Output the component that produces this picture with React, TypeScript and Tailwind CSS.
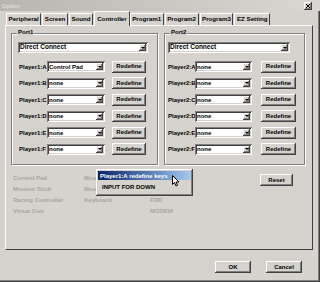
import React from 'react';

const raised =
  'bg-[#d6d3ce] shadow-[inset_-1px_-1px_0_#404040,inset_1px_1px_0_#ffffff,inset_-2px_-2px_0_#808080]';
const sunken =
  'bg-white shadow-[inset_1px_1px_0_#808080,inset_-1px_-1px_0_#ffffff,inset_2px_2px_0_#404040,inset_-2px_-2px_0_#d6d3ce]';

function Btn({ label, className }: { label: string; className: string }) {
  return (
    <div className={`flex items-center justify-center text-black ${raised} ${className}`}>
      {label}
    </div>
  );
}

// Combo box with the little drop arrow button at the right
function Combo({ value, className }: { value: string; className: string }) {
  return (
    <div className={`flex items-center h-[11px] pl-[2px] pr-[2px] ${sunken} ${className}`}>
      <span className="flex-1 truncate text-black leading-none">{value}</span>
      <div className={`w-[7px] h-[7px] flex items-center justify-center ${raised}`}>
        <svg width="4" height="2" viewBox="0 0 4 2">
          <path d="M0 0h4L2 2z" fill="#000" />
        </svg>
      </div>
    </div>
  );
}

function PlayerRow({ label, value, comboW, btnW, labelW, gap }: {
  label: string; value: string; comboW: string; btnW: string; labelW: string; gap: string;
}) {
  return (
    <div className="flex items-center h-[11px]">
      <div className={`${labelW} overflow-hidden whitespace-nowrap leading-none text-black`}>{label}</div>
      <Combo value={value} className={comboW} />
      <Btn label="Redefine" className={`${btnW} ${gap} h-[12px]`} />
    </div>
  );
}

const letters = ['A', 'B', 'C', 'D', 'E', 'F'];

function Group({ title, width, children }: { title: string; width: string; children: React.ReactNode }) {
  return (
    <div className={`relative ${width} h-[132px] border border-[#808080] shadow-[1px_1px_0_#ffffff,inset_1px_1px_0_#ffffff]`}>
      <span className="absolute -top-[5px] left-[5px] px-[1px] bg-[#d6d3ce] leading-none text-black">{title}</span>
      {children}
    </div>
  );
}

export default function App() {
  const tabs = ['Peripheral', 'Screen', 'Sound', 'Controller', 'Program1', 'Program2', 'Program3', 'EZ Setting'];
  return (
    <div
      className="relative w-[320px] h-[282px] overflow-hidden bg-[#d6d3ce] text-[6px] font-bold shadow-[inset_-1px_-1px_0_#404040,inset_-2px_-2px_0_#808080]"
      style={{ fontFamily: '"Liberation Sans", Arial, sans-serif' }}
    >
      {/* Title bar */}
      <div className="flex items-center h-[11px] bg-gradient-to-r from-[#b9b6b0] to-[#d9d7d2] pl-[2px] pr-[8px]">
        <span className="text-[#e8e6e2] font-normal leading-none">Option</span>
        <div className={`ml-auto w-[8px] h-[8px] flex items-center justify-center ${raised}`}>
          <svg width="4" height="4" viewBox="0 0 4 4">
            <path d="M0 0L4 4M4 0L0 4" stroke="#000" strokeWidth="1" />
          </svg>
        </div>
      </div>

      {/* Tabs */}
      <div className="flex items-end h-[14px] pl-[6px]">
        {tabs.map((t) => {
          const active = t === 'Controller';
          return (
            <div
              key={t}
              className={`flex items-center leading-none text-[6.2px] text-black border-t border-l border-white border-r border-r-[#404040] ${
                active ? 'relative z-10 h-[15px] -mb-px px-[2px] bg-[#d6d3ce]' : 'h-[12px] px-[1.5px] mr-[1px]'
              }`}
            >
              {t}
            </div>
          );
        })}
      </div>

      {/* Tab panel */}
      <div className="mx-[5px] w-[308px] h-[225px] border border-t-white border-l-white border-r-[#404040] border-b-[#404040] pl-[5px] pt-[7px]">
        <div className="flex gap-[6px]">
          <Group title="Port1" width="w-[147px]">
            <div className="pl-[6px] pt-[8px]">
              <Combo value="Direct Connect" className="w-[130px] text-[6.5px]" />
              <div className="flex flex-col gap-[5.6px] mt-[8px] pl-[1px]">
                {letters.map((l, i) => (
                  <PlayerRow
                    key={l}
                    label={`Player1:${l}`}
                    value={i === 0 ? 'Control Pad' : 'none'}
                    labelW="w-[28px]"
                    comboW="w-[58px]"
                    btnW="w-[34px]"
                    gap="ml-[7px]"
                  />
                ))}
              </div>
            </div>
          </Group>
          <Group title="Port2" width="w-[141px]">
            <div className="pl-[3px] pt-[8px]">
              <Combo value="Direct Connect" className="w-[122px] text-[6.5px]" />
              <div className="flex flex-col gap-[5.6px] mt-[8px]">
                {letters.map((l) => (
                  <PlayerRow
                    key={l}
                    label={`Player2:${l}`}
                    value="none"
                    labelW="w-[27px]"
                    comboW="w-[57px]"
                    btnW="w-[35px]"
                    gap="ml-[9px]"
                  />
                ))}
              </div>
            </div>
          </Group>
        </div>

        {/* Peripheral list (disabled) */}
        <div className="flex mt-[7px] pl-[2px]">
          <div className="grid grid-cols-[71px_66px_47px_60px] auto-rows-[11px] items-center text-[#a8a59e] leading-none whitespace-nowrap">
            <span>Control Pad</span>
            <span>Mouse</span>
            <span>Shuttle Mouse</span>
            <span></span>
            <span>Mission Stick</span>
            <span>Mouse</span>
            <span></span>
            <span></span>
            <span>Racing Controller</span>
            <span>Keyboard</span>
            <span>FDD</span>
            <span></span>
            <span>Virtua Gun</span>
            <span></span>
            <span>MODEM</span>
            <span></span>
          </div>
          <Btn label="Reset" className="ml-auto mr-[19px] mt-[2px] w-[33px] h-[12px]" />
        </div>
      </div>

      {/* Dialog buttons */}
      <div className="flex justify-end gap-[15px] pr-[18px] mt-[11px]">
        <Btn label="OK" className="w-[36px] h-[12px]" />
        <Btn label="Cancel" className="w-[36px] h-[12px]" />
      </div>

      {/* Context menu */}
      <div className={`absolute left-[96px] top-[169px] w-[97px] h-[27px] p-[2px] flex flex-col ${raised}`}>
        <div className="h-[9px] flex items-center pl-[2px] text-white leading-none whitespace-nowrap overflow-hidden bg-gradient-to-r from-[#0a246a] to-[#a6caf0]">
          Player1:A redefine keys
        </div>
        <div className="flex-1 flex items-center pl-[4px] text-black leading-none">INPUT FOR DOWN</div>
      </div>

      {/* Mouse cursor */}
      <svg className="absolute left-[172px] top-[175px]" width="8" height="12" viewBox="0 0 8 12">
        <path d="M0.5 0.5v9l2-2 1.5 3.5 1.5-0.7-1.5-3.3h3z" fill="#fff" stroke="#000" strokeWidth="1" />
      </svg>
    </div>
  );
}
